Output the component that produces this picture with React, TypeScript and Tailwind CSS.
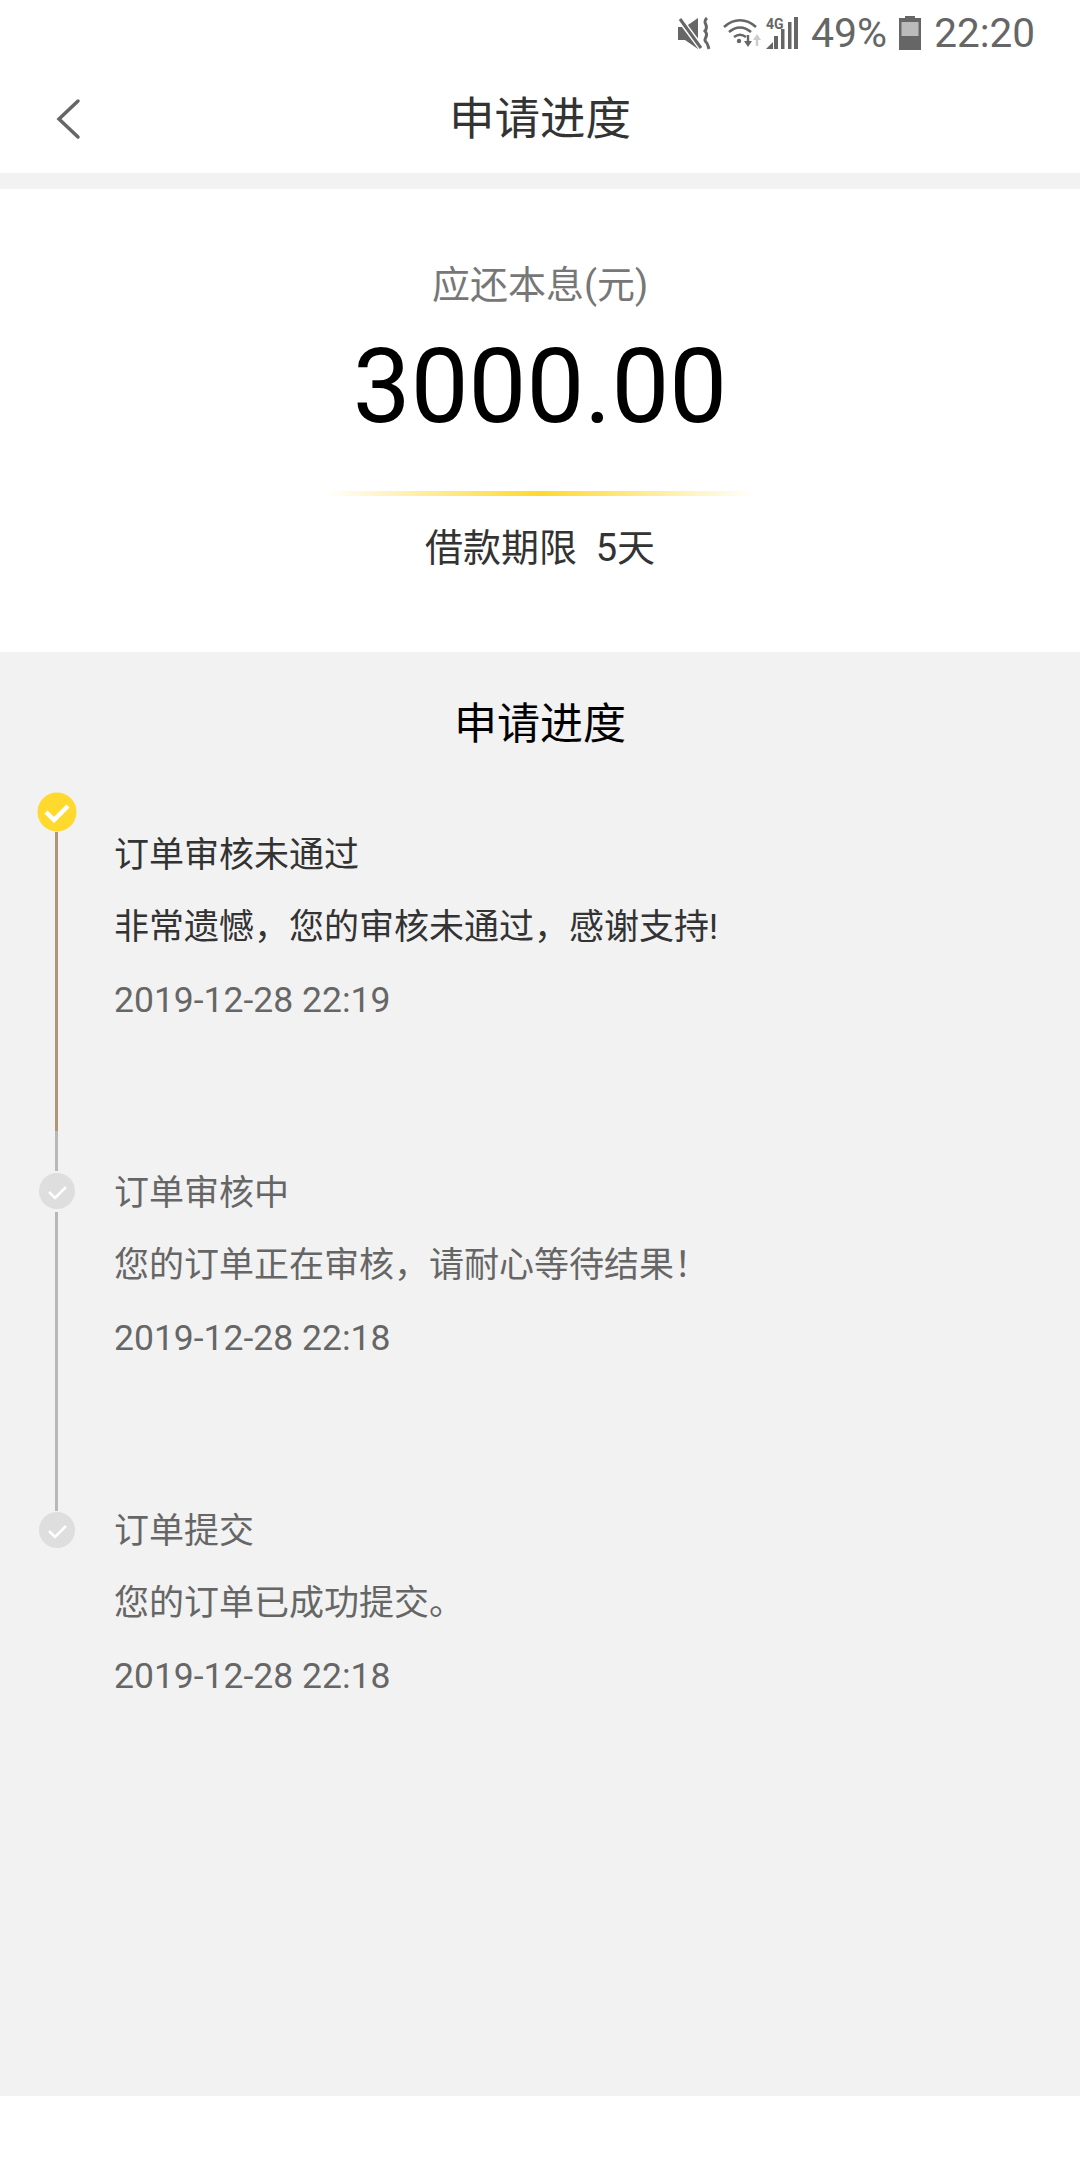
const sans = 'font-["Roboto","Noto_Sans_CJK_SC",sans-serif]';

const steps = [
    { title: '订单审核未通过', desc: '非常遗憾，您的审核未通过，感谢支持!', time: '2019-12-28 22:19', active: true },
    { title: '订单审核中', desc: '您的订单正在审核，请耐心等待结果！', time: '2019-12-28 22:18', active: false },
    { title: '订单提交', desc: '您的订单已成功提交。', time: '2019-12-28 22:18', active: false },
];

function StatusIcons() {
    return (
        <div className="flex items-center">
            {/* muted */}
            <svg width="33" height="33" viewBox="0 0 33 33" fill="#666">
                <path d="M0 10h7L20 1v31L7 23H0z" />
                <path d="M1 1l23 31" stroke="#fff" strokeWidth="6" />
                <path d="M2 2l21 29" stroke="#666" strokeWidth="3" />
                <path d="M29 1c-6 5 3 7-2 13 5 5-3 8 1 11 2 2 2 4 3 7" fill="none" stroke="#666" strokeWidth="3" />
            </svg>
            {/* wifi */}
            <svg width="38" height="30" viewBox="0 0 38 30" fill="none" className="ml-[12px]">
                <path d="M1 9c10-9 22-9 32 0" stroke="#666" strokeWidth="2.600" />
                <path d="M6 14c7-6 15-6 22 0" stroke="#666" strokeWidth="2.600" />
                <path d="M11 19c4-3 8-3 12 0" stroke="#666" strokeWidth="2.600" />
                <circle cx="16" cy="23" r="2.200" fill="#666" />
                <path d="M25 17v7" stroke="#666" strokeWidth="2.400" />
                <path d="M21 23h8l-4 6z" fill="#666" />
                <path d="M34 28v-7" stroke="#ccc" strokeWidth="2.400" />
                <path d="M30 22h8l-4-6z" fill="#ccc" />
            </svg>
            {/* 4G signal */}
            <div className="relative w-[33px] h-[34px] ml-[5px]">
                <svg width="33" height="34" viewBox="0 0 33 34" fill="#666" className="absolute inset-0">
                    <path d="M0 33l7-7v7z" />
                    <rect x="8" y="20" width="4" height="13" />
                    <rect x="15" y="13" width="3.500" height="20" />
                    <rect x="22" y="6" width="3.500" height="27" />
                    <rect x="28" y="1" width="4" height="32" />
                </svg>
                <span className={`${sans} absolute left-0 top-[1px] text-[14px] leading-[14px] font-bold text-[#666]`}>4G</span>
            </div>
            <span className={`${sans} text-[41px] leading-[48px] text-[#666] ml-[12px]`}>49%</span>
            {/* battery */}
            <svg width="22" height="34" viewBox="0 0 22 34" className="ml-[12px]">
                <rect x="6" y="0" width="10" height="3" fill="#666" />
                <rect x="0" y="2" width="22" height="32" fill="#666" />
                <rect x="2.500" y="6" width="17" height="14" fill="#bbb" />
            </svg>
            <span className={`${sans} text-[40.500px] leading-[48px] text-[#666] ml-[13px]`}>22:20</span>
        </div>
    );
}

export default function App() {
    return (
        <div className={`${sans} w-[1080px] h-[2160px] bg-white flex flex-col overflow-hidden`}>
            <div className="h-[60px] flex items-center justify-end pr-[45px] pt-[6px]">
                <StatusIcons />
            </div>

            {/* Nav */}
            <div className="relative h-[113px] flex items-center justify-center">
                <svg width="26" height="42" viewBox="0 0 26 42" fill="none" className="absolute left-[56px] top-[38px]">
                    <path d="M22 3L3 21L22 39" stroke="#666" strokeWidth="3.500" strokeLinecap="round" />
                </svg>
                <span className="text-[45.500px] leading-[60px] text-[#333] mt-[7px]">申请进度</span>
            </div>
            <div className="h-[16px] bg-[#f2f2f2]" />

            {/* Amount */}
            <section className="h-[463px] flex flex-col items-center">
                <div className="mt-[69px] text-[38px] leading-[54px] text-[#777]">应还本息(元)</div>
                <div className="mt-[15px] text-[103px] leading-[120px] text-black">3000.00</div>
                <div className="mt-[44px] w-[430px] h-[5px] bg-gradient-to-r from-[#ffd92e]/0 via-[#ffd92e] to-[#ffd92e]/0" />
                <div className="mt-[26px] text-[38px] leading-[52px] text-[#333]">
                    借款期限&nbsp;&nbsp;5天
                </div>
            </section>

            {/* Progress */}
            <section className="flex-1 bg-[#f2f2f2]">
                <h2 className="mt-[44px] text-center text-[43px] leading-[56px] font-normal text-black">申请进度</h2>
                <div className="mt-[30px]">
                    {steps.map((step, i) => (
                        <div key={step.title} className={`flex ${i === 0 ? 'h-[380px]' : 'h-[338px]'}`}>
                            <div className="relative w-[114px] shrink-0">
                                {step.active ? (
                                    <svg width="40" height="40" viewBox="0 0 40 40" className="absolute left-[37px] top-[10px]">
                                        <circle cx="20" cy="20" r="19.500" fill="#ffd92e" />
                                        <path d="M9 20l8 8 14-14" fill="none" stroke="#fff" strokeWidth="4.500" />
                                    </svg>
                                ) : (
                                    <svg width="36" height="36" viewBox="0 0 36 36" className={`absolute left-[39px] ${i === 2 ? 'top-[12px]' : 'top-[11px]'}`}>
                                        <circle cx="18" cy="18" r="18" fill="#dedede" />
                                        <path d="M10 19l6 6 11-11" fill="none" stroke="#fff" strokeWidth="2.500" />
                                    </svg>
                                )}
                                {i === 0 && (
                                    <>
                                        <div className="absolute left-[55px] top-[50px] w-[3px] h-[299px] bg-[#b09672]" />
                                        <div className="absolute left-[55px] top-[349px] w-[3px] h-[40px] bg-[#b8b8b8]" />
                                    </>
                                )}
                                {i === 1 && <div className="absolute left-[55px] top-[50px] w-[3px] h-[299px] bg-[#b8b8b8]" />}
                            </div>
                            <div className={`flex flex-col gap-[20px] ${i === 0 ? 'pt-[48px]' : 'pt-[6px]'}`}>
                                <div className={`text-[35px] leading-[52px] ${step.active ? 'text-[#333]' : 'text-[#666]'}`}>{step.title}</div>
                                <div className={`text-[35px] leading-[52px] ${step.active ? 'text-[#333]' : 'text-[#666]'}`}>{step.desc}</div>
                                <div className="text-[35.500px] leading-[52px] text-[#666]">{step.time}</div>
                            </div>
                        </div>
                    ))}
                </div>
            </section>
            <div className="h-[64px] bg-white" />
        </div>
    );
}
